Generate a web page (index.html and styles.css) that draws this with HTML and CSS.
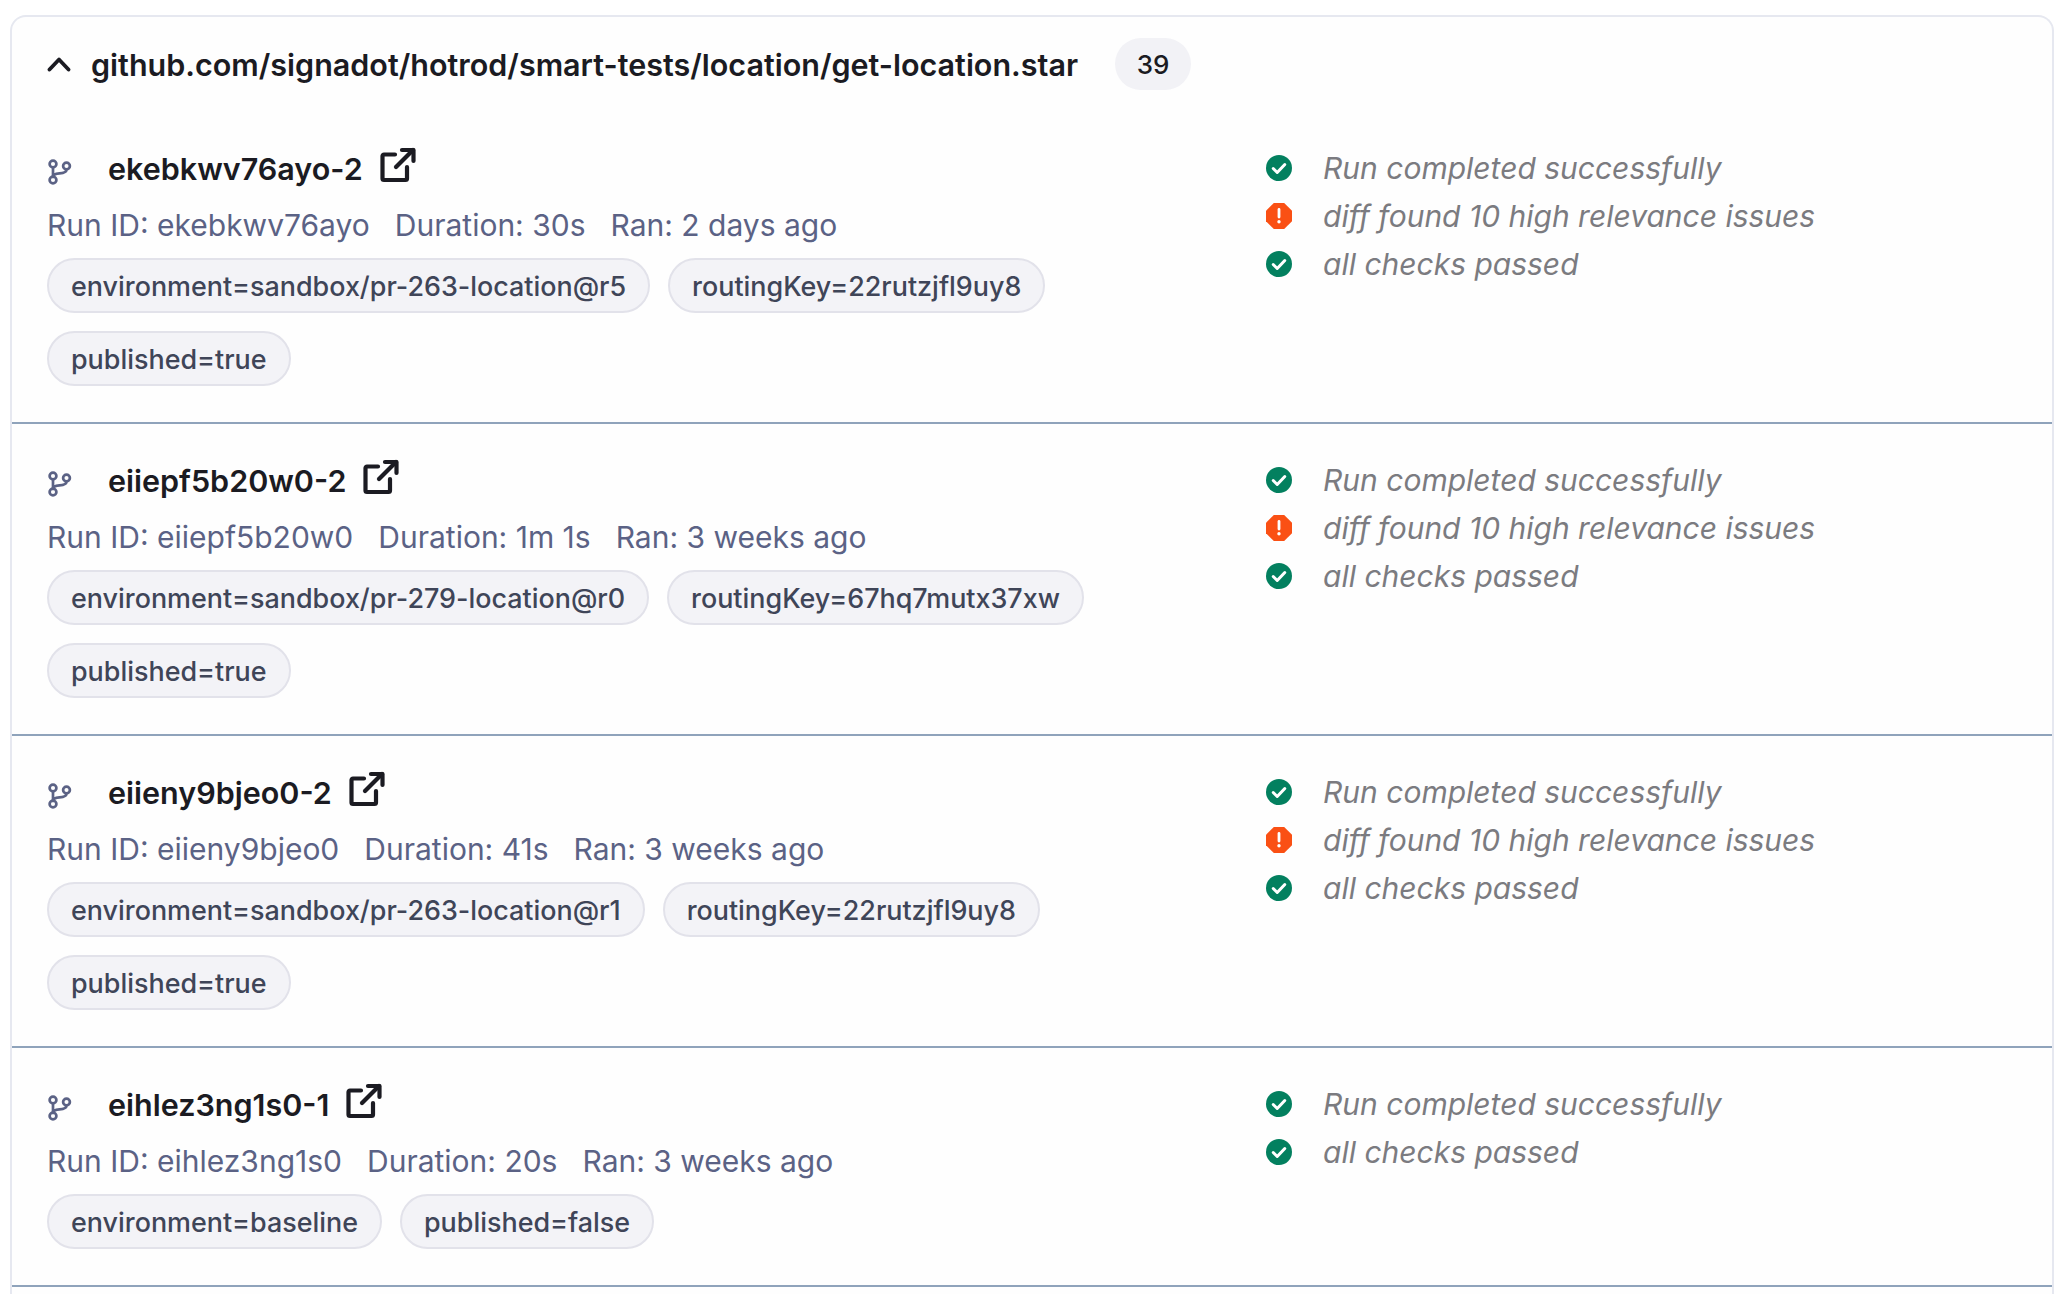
FILE: index.html
```html
<!DOCTYPE html>
<html lang="en">
<head>
<meta charset="utf-8">
<title>Smart test runs</title>
<link rel="stylesheet" href="styles.css">
</head>
<body>
<svg class="defs" width="0" height="0" aria-hidden="true">
  <symbol id="i-branch" viewBox="0 0 24 26"><g fill="none" stroke="currentColor" stroke-width="2.7" stroke-linecap="round" stroke-linejoin="round"><circle cx="5" cy="5" r="3.400"/><circle cx="5" cy="21" r="3.400"/><circle cx="18.500" cy="7" r="3.400"/><path d="M5 8.400v9.200M18.500 10.400c0 3-3 3.600-7 4-4 .4-6.500 1.500-6.500 3.600"/></g></symbol>
  <symbol id="i-ext" viewBox="0 0 36 36"><g fill="none" stroke="currentColor" stroke-width="4.200" stroke-linecap="round" stroke-linejoin="round"><path d="M15 7.500H4A1.500 1.500 0 0 0 2.500 9V31.500A1.500 1.500 0 0 0 4 33H25.500A1.500 1.500 0 0 0 27 31.500V20"/><path d="M16 20 33 3"/><path d="M22 3h11.500V14"/></g></symbol>
  <symbol id="i-ok" viewBox="0 0 26 26"><circle cx="13" cy="13" r="13" fill="#03805f"/><path d="M7.200 13.500l4 4 7.600-8" fill="none" stroke="#fff" stroke-width="3" stroke-linecap="round" stroke-linejoin="round"/></symbol>
  <symbol id="i-warn" viewBox="0 0 26 26"><path d="M7.800 0h10.400L26 7.800v10.400L18.200 26H7.800L0 18.200V7.800z" fill="#fa5014"/><path d="M13 6.500v7.500" stroke="#fff" stroke-width="2.800" stroke-linecap="round"/><circle cx="13" cy="18.800" r="1.700" fill="#fff"/></symbol>
</svg>
<main class="card">
  <header class="group-head">
    <svg class="chevron" viewBox="0 0 24 16"><path d="M2.500 13.500 12 3.500l9.500 10" fill="none" stroke="currentColor" stroke-width="3.800" stroke-linecap="round" stroke-linejoin="round"/></svg>
    <span class="group-name">github.com/signadot/hotrod/smart-tests/location/get-location.star</span>
    <span class="count">39</span>
  </header>

  <section class="run run-first">
    <div class="run-main">
      <div class="run-title"><svg class="branch"><use href="#i-branch"/></svg><span class="run-name">ekebkwv76ayo-2</span><svg class="ext"><use href="#i-ext"/></svg></div>
      <div class="meta"><span>Run ID: ekebkwv76ayo</span><span>Duration: 30s</span><span>Ran: 2 days ago</span></div>
      <div class="tags"><span class="tag">environment=sandbox/pr-263-location@r5</span><span class="tag">routingKey=22rutzjfl9uy8</span><span class="tag">published=true</span></div>
    </div>
    <ul class="status">
      <li><svg class="st"><use href="#i-ok"/></svg>Run completed successfully</li>
      <li><svg class="st"><use href="#i-warn"/></svg>diff found 10 high relevance issues</li>
      <li><svg class="st"><use href="#i-ok"/></svg>all checks passed</li>
    </ul>
  </section>

  <section class="run">
    <div class="run-main">
      <div class="run-title"><svg class="branch"><use href="#i-branch"/></svg><span class="run-name">eiiepf5b20w0-2</span><svg class="ext"><use href="#i-ext"/></svg></div>
      <div class="meta"><span>Run ID: eiiepf5b20w0</span><span>Duration: 1m 1s</span><span>Ran: 3 weeks ago</span></div>
      <div class="tags"><span class="tag">environment=sandbox/pr-279-location@r0</span><span class="tag">routingKey=67hq7mutx37xw</span><span class="tag">published=true</span></div>
    </div>
    <ul class="status">
      <li><svg class="st"><use href="#i-ok"/></svg>Run completed successfully</li>
      <li><svg class="st"><use href="#i-warn"/></svg>diff found 10 high relevance issues</li>
      <li><svg class="st"><use href="#i-ok"/></svg>all checks passed</li>
    </ul>
  </section>

  <section class="run">
    <div class="run-main">
      <div class="run-title"><svg class="branch"><use href="#i-branch"/></svg><span class="run-name">eiieny9bjeo0-2</span><svg class="ext"><use href="#i-ext"/></svg></div>
      <div class="meta"><span>Run ID: eiieny9bjeo0</span><span>Duration: 41s</span><span>Ran: 3 weeks ago</span></div>
      <div class="tags"><span class="tag">environment=sandbox/pr-263-location@r1</span><span class="tag">routingKey=22rutzjfl9uy8</span><span class="tag">published=true</span></div>
    </div>
    <ul class="status">
      <li><svg class="st"><use href="#i-ok"/></svg>Run completed successfully</li>
      <li><svg class="st"><use href="#i-warn"/></svg>diff found 10 high relevance issues</li>
      <li><svg class="st"><use href="#i-ok"/></svg>all checks passed</li>
    </ul>
  </section>

  <section class="run">
    <div class="run-main">
      <div class="run-title"><svg class="branch"><use href="#i-branch"/></svg><span class="run-name">eihlez3ng1s0-1</span><svg class="ext"><use href="#i-ext"/></svg></div>
      <div class="meta"><span>Run ID: eihlez3ng1s0</span><span>Duration: 20s</span><span>Ran: 3 weeks ago</span></div>
      <div class="tags"><span class="tag">environment=baseline</span><span class="tag">published=false</span></div>
    </div>
    <ul class="status">
      <li><svg class="st"><use href="#i-ok"/></svg>Run completed successfully</li>
      <li><svg class="st"><use href="#i-ok"/></svg>all checks passed</li>
    </ul>
  </section>
</main>
</body>
</html>
```

FILE: styles.css
```css
* { box-sizing: border-box; }
html, body { height: 100%; overflow: hidden; }
body {
  margin: 0;
  padding: 15px 14px 0 10px;
  background: #fff;
  font-family: Inter, "Noto Sans", sans-serif;
  color: #1b1b22;
}
.defs { position: absolute; }
.card {
  min-height: 1320px;
  border: 2px solid #e6e8f0;
  border-bottom: 0;
  border-radius: 16px 16px 0 0;
  background: #fefefe;
}
.group-head {
  display: flex;
  align-items: center;
  height: 90px;
  padding: 4px 0 0 35px;
}
.chevron { width: 24px; height: 16px; color: #1b1b22; flex: none; }
.group-name { margin-left: 20px; font-size: 30.5px; font-weight: 600; white-space: nowrap; }
.count {
  margin-left: 37px;
  width: 76px;
  height: 52px;
  border-radius: 26px;
  background: #f2f2f6;
  display: flex;
  align-items: center;
  justify-content: center;
  font-size: 26px;
  font-weight: 500;
}
.run {
  display: flex;
  height: 312px;
  padding: 34px 0 0 35px;
  border-bottom: 2px solid #8fa3bb;
}
.run-first { height: 317px; padding-top: 39px; }
.run:last-child { height: 239px; }
.run-main { width: 1219px; flex: none; }
.run-title { display: flex; align-items: center; height: 44px; }
.branch { width: 24px; height: 26px; color: #5b6285; flex: none; margin: 8px 0 0 1px; }
.run-name { margin-left: 36px; font-size: 30.5px; font-weight: 600; white-space: nowrap; }
.ext { width: 36px; height: 36px; margin-left: 17px; margin-top: -6px; color: #1b1b22; flex: none; }
.meta {
  display: flex;
  gap: 25px;
  margin-top: 13px;
  height: 44px;
  align-items: center;
  font-size: 30px;
  color: #5b6285;
  white-space: nowrap;
}
.tags { display: flex; flex-wrap: wrap; gap: 18px; margin-top: 11px; width: 1100px; }
.tag {
  height: 55px;
  padding: 0 22px;
  display: flex;
  align-items: center;
  border: 2px solid #e2e2ea;
  border-radius: 28px;
  background: #f3f3f7;
  font-size: 26.9px;
  font-weight: 500;
  color: #3f4558;
  white-space: nowrap;
}
.status { list-style: none; margin: -2px 0 0; padding: 0; }
.status li {
  display: flex;
  align-items: center;
  height: 48px;
  font-size: 30px;
  font-style: italic;
  color: #7b7b80;
  white-space: nowrap;
}
.st { width: 26px; height: 26px; margin-right: 31px; flex: none; }
```
